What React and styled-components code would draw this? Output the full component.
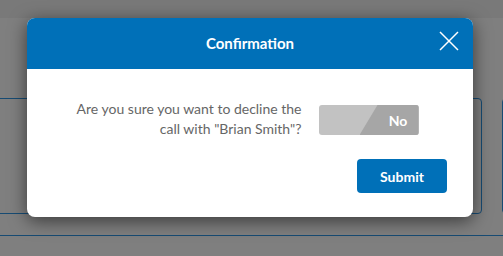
import React from 'react';
import styled, { createGlobalStyle } from 'styled-components';

const Global = createGlobalStyle`
  html, body { margin: 0; padding: 0; }
  body { font-family: Lato, "Open Sans", sans-serif; width: 503px; height: 256px; overflow: hidden; }
`;

// ─── page behind the dialog ───
const Page = styled.div`
  position: relative;
  width: 503px;
  height: 256px;
  background: #ffffff;
  overflow: hidden;
`;
const TopBand = styled.div`
  height: 18px;
  background: #f2f2f2;
`;
const CardsRow = styled.div`
  display: flex;
  gap: 20px;
  margin: 80px 0 0 -20px;
`;
const Card = styled.div`
  flex: 0 0 ${({ w }) => w}px;
  height: 116px;
  border: 1px solid #2e96e6;
  border-radius: 4px;
  box-sizing: border-box;
`;
const Rule = styled.div`
  margin-top: 21px;
  border-top: 1px solid #2e96e6;
`;

// ─── dialog ───
const Overlay = styled.div`
  position: absolute;
  inset: 0;
  background: rgba(0, 0, 0, 0.5);
  display: flex;
  justify-content: center;
  align-items: flex-start;
  padding-top: 18px;
`;
const Modal = styled.div`
  width: 446px;
  height: 199px;
  margin-left: -3px;
  background: #fff;
  border-radius: 8px;
  overflow: hidden;
  box-shadow: 0 4px 18px rgba(0, 0, 0, 0.55);
  display: flex;
  flex-direction: column;
`;
const Header = styled.div`
  position: relative;
  height: 51px;
  background: #0070b8;
  display: flex;
  align-items: center;
  justify-content: center;
`;
const Title = styled.h2`
  margin: 0 0 2px;
  color: #fff;
  font-size: 15px;
  font-weight: 700;
`;
const Close = styled.button`
  position: absolute;
  right: 14px;
  top: 13px;
  width: 20px;
  height: 20px;
  padding: 0;
  border: 0;
  background: none;
  cursor: pointer;
`;
const Body = styled.div`
  flex: 1;
  padding: 30px 26px 24px;
  display: flex;
  flex-direction: column;
`;
const Question = styled.div`
  display: flex;
  align-items: center;
  justify-content: center;
  gap: 17px;
  margin-left: -6px;
`;
const Text = styled.p`
  margin: 0;
  width: 226px;
  text-align: right;
  color: #666;
  font-size: 14px;
  line-height: 20px;
`;
const Toggle = styled.div`
  position: relative;
  width: 100px;
  height: 30px;
  margin-top: 2px;
  border-radius: 3px;
  background: #c2c2c2;
  overflow: hidden;
`;
const ToggleOn = styled.div`
  position: absolute;
  inset: 0 0 0 41px;
  background: #a6a6a6;
  clip-path: polygon(18px 0, 100% 0, 100% 100%, 0 100%);
  display: flex;
  align-items: center;
  justify-content: center;
  padding-left: 18px;
  color: #fff;
  font-weight: 700;
  font-size: 14px;
`;
const Footer = styled.div`
  margin-top: 20px;
  display: flex;
  justify-content: flex-end;
`;
const Submit = styled.button`
  width: 90px;
  height: 34px;
  border: 0;
  border-radius: 4px;
  background: #0070b8;
  color: #fff;
  font-family: inherit;
  font-size: 14px;
  font-weight: 700;
`;

export default function App() {
  return (
    <>
      <Global />
      <Page>
        <TopBand />
        <CardsRow>
          <Card w={502} />
          <Card w={200} />
        </CardsRow>
        <Rule />
        <Overlay>
          <Modal>
            <Header>
              <Title>Confirmation</Title>
              <Close aria-label="close">
                <svg width="20" height="20" viewBox="0 0 20 20">
                  <path d="M1 1L19 19M19 1L1 19" stroke="#fff" strokeWidth="1.5" fill="none" />
                </svg>
              </Close>
            </Header>
            <Body>
              <Question>
                <Text>Are you sure you want to decline the call with "Brian Smith"?</Text>
                <Toggle>
                  <ToggleOn>No</ToggleOn>
                </Toggle>
              </Question>
              <Footer>
                <Submit>Submit</Submit>
              </Footer>
            </Body>
          </Modal>
        </Overlay>
      </Page>
    </>
  );
}
